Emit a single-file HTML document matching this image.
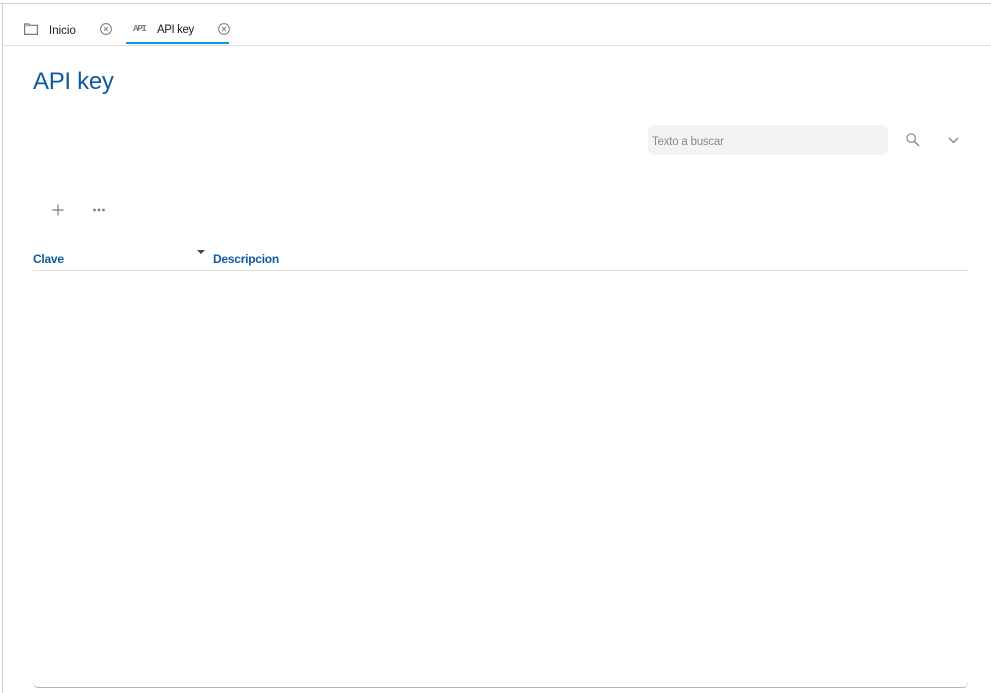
<!DOCTYPE html>
<html lang="es">
<head>
<meta charset="utf-8">
<title>API key</title>
<style>
html,body{margin:0;padding:0;background:#fff;}
body{position:relative;width:991px;height:693px;overflow:hidden;font-family:"Liberation Sans",sans-serif;}
.a{position:absolute;white-space:nowrap;}
svg{position:absolute;overflow:visible;}
</style>
</head>
<body>
<div class="a" style="left:0;top:3px;width:991px;height:1px;background:#d0d0d0"></div>
<div class="a" style="left:2px;top:3px;width:1px;height:690px;background:#d0d0d0"></div>
<div class="a" style="left:3px;top:45px;width:988px;height:1px;background:#e0e0e0"></div>

<svg style="left:24px;top:23px" width="14" height="12" viewBox="0 0 14 12" fill="none" stroke="#777" stroke-width="1.2"><path d="M.6 11.4V1h4.4l1 1.3h7.4v9.1z"/><path d="M.6 2.8h5.6" stroke="#aaa"/></svg>
<div class="a" style="left:49px;top:24px;font-size:11.5px;line-height:14px;color:#1a1a1a">Inicio</div>
<svg style="left:100px;top:23px" width="12" height="12" viewBox="0 0 12 12" fill="none" stroke="#888" stroke-width="1.1"><circle cx="6" cy="6" r="5.4"/><path d="M4 4l4 4M8 4l-4 4"/></svg>

<div class="a" style="left:133px;top:23px;font-family:'Liberation Mono',monospace;font-size:9.5px;font-weight:bold;line-height:11px;letter-spacing:-1.5px;color:#808080">API</div>
<div class="a" style="left:157px;top:23px;font-size:11.5px;line-height:14px;letter-spacing:-.4px;color:#1a1a1a">API key</div>
<svg style="left:218px;top:23px" width="12" height="12" viewBox="0 0 12 12" fill="none" stroke="#888" stroke-width="1.1"><circle cx="6" cy="6" r="5.4"/><path d="M4 4l4 4M8 4l-4 4"/></svg>
<div class="a" style="left:126px;top:42px;width:103px;height:2px;background:#0f9ae0"></div>

<div class="a" style="left:33px;top:68px;font-size:24px;line-height:28px;letter-spacing:-.3px;color:#0e5a9e">API key</div>

<div class="a" style="left:648px;top:125px;width:240px;height:30px;background:#f3f3f3;border-radius:5px"></div>
<div class="a" style="left:652px;top:135px;font-size:11.5px;line-height:14px;letter-spacing:-.22px;color:#8a8a8a">Texto a buscar</div>
<svg style="left:906px;top:133px" width="14" height="14" viewBox="0 0 15 15" fill="none" stroke="#808080"><circle cx="5.5" cy="5.5" r="4.5" stroke-width="1.2"/><path d="M9 9l5 5" stroke-width="1.5"/></svg>
<svg style="left:948px;top:137px" width="11" height="7" viewBox="0 0 11 7" fill="none" stroke="#808080" stroke-width="1.3"><path d="M1 1l4.5 4.5L10 1"/></svg>

<svg style="left:52px;top:204px" width="12" height="12" viewBox="0 0 12 12" fill="none" stroke="#8a8a8a" stroke-width="1.4"><path d="M6 .5v11M.5 6h11"/></svg>
<svg style="left:93px;top:208px" width="13" height="4" viewBox="0 0 13 4" fill="#808080"><circle cx="1.5" cy="2" r="1.4"/><circle cx="6" cy="2" r="1.4"/><circle cx="10.5" cy="2" r="1.4"/></svg>

<div class="a" style="left:33px;top:252px;font-size:12px;line-height:15px;font-weight:bold;letter-spacing:-.25px;color:#0e5a9e">Clave</div>
<svg style="left:197px;top:250px" width="8" height="4" viewBox="0 0 8 4" fill="#444"><path d="M0 0h8L4 4z"/></svg>
<div class="a" style="left:213px;top:252px;font-size:12px;line-height:15px;font-weight:bold;letter-spacing:-.25px;color:#0e5a9e">Descripcion</div>
<div class="a" style="left:33px;top:270px;width:935px;height:1px;background:#e0e0e0"></div>

<div class="a" style="left:33px;top:683px;width:935px;height:5px;box-sizing:border-box;border:1px solid #b4b4b4;border-top:0;border-radius:0 0 5px 5px;border-left-color:#e0e0e0;border-right-color:#e0e0e0"></div>
</body>
</html>
